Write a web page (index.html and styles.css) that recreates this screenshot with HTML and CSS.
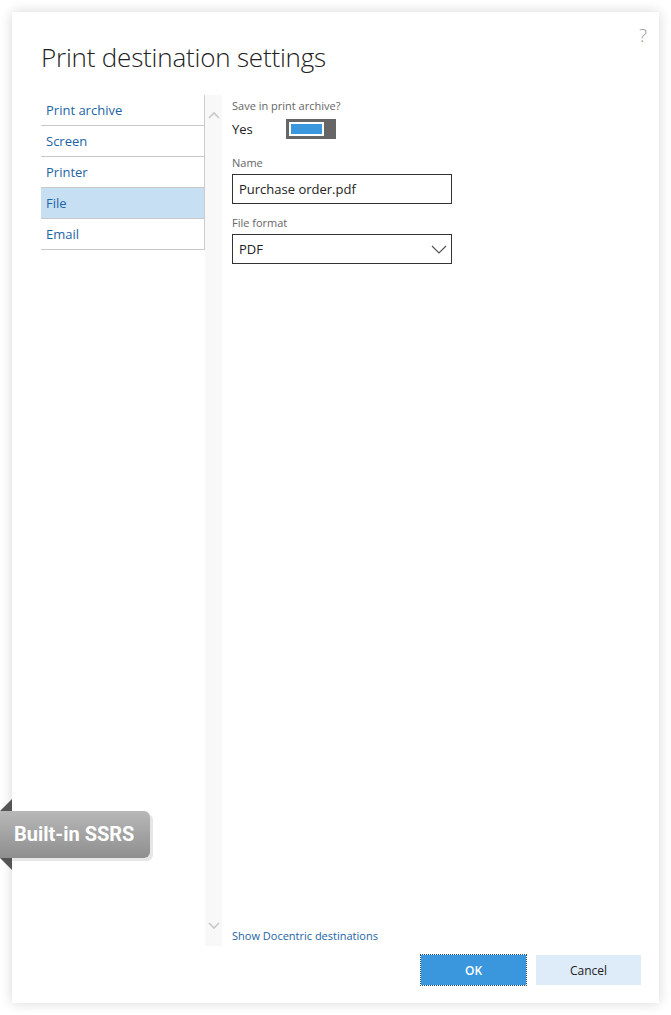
FILE: index.html
```html
<!DOCTYPE html>
<html lang="en">
<head>
    <meta charset="UTF-8">
    <meta name="viewport" content="width=device-width, initial-scale=1.0">
    <title>Print destination settings</title>
    <link rel="stylesheet" href="styles.css">
</head>
<body>
    <div class="dialog">
        <span class="help">?</span>
        <h1>Print destination settings</h1>

        <div class="body">
            <ul class="nav">
                <li>Print archive</li>
                <li>Screen</li>
                <li>Printer</li>
                <li class="active">File</li>
                <li>Email</li>
            </ul>

            <div class="scroller">
                <svg width="12" height="8" viewBox="0 0 12 8"><path d="M1 7 L6 2 L11 7" fill="none" stroke="#c8c8c8" stroke-width="1.6"/></svg>
                <svg width="12" height="8" viewBox="0 0 12 8"><path d="M1 1 L6 6 L11 1" fill="none" stroke="#c8c8c8" stroke-width="1.6"/></svg>
            </div>

            <div class="content">
                <div class="field switch-field">
                    <label>Save in print archive?</label>
                    <div class="toggle-row">
                        <span>Yes</span>
                        <span class="toggle"><span class="toggle-fill"></span><span class="toggle-thumb"></span></span>
                    </div>
                </div>
                <div class="field">
                    <label>Name</label>
                    <div class="input">Purchase order.pdf</div>
                </div>
                <div class="field">
                    <label>File format</label>
                    <div class="input select">
                        <span>PDF</span>
                        <svg width="16" height="9" viewBox="0 0 16 9"><path d="M1 1 L8 8 L15 1" fill="none" stroke="#555" stroke-width="1.2"/></svg>
                    </div>
                </div>
                <a class="more" href="#">Show Docentric destinations</a>
            </div>
        </div>

        <div class="actions">
            <button class="ok">OK</button>
            <button class="cancel">Cancel</button>
        </div>
    </div>

    <!-- ribbon overlay -->
    <div class="ribbon">Built-in SSRS</div>
</body>
</html>
```

FILE: styles.css
```css
body {
    margin: 0;
    background-color: #fff;
    font-family: 'Open Sans', 'Noto Sans', sans-serif;
    color: #222;
}
.dialog {
    position: relative;
    margin: 12px;
    width: 647px;
    height: 991px;
    background-color: #fff;
    box-shadow: 0 0 12px rgba(0,0,0,0.16);
    display: flex;
    flex-direction: column;
    box-sizing: border-box;
    padding: 0 18px 18px 29px;
}
.help {
    position: absolute;
    top: 10px;
    right: 12px;
    font-size: 19px;
    font-weight: 300;
    color: #999;
}
h1 {
    margin: 27px 0 20px 0;
    font-size: 26px;
    font-weight: 300;
    color: #222;
    letter-spacing: -0.2px;
    line-height: 36px;
}
.body {
    flex: 1;
    display: flex;
}
.nav {
    list-style: none;
    margin: 0;
    padding: 0;
    width: 163px;
    align-self: flex-start;
    border-right: 1px solid #ccc;
}
.nav li {
    height: 30px;
    line-height: 30px;
    padding-left: 5px;
    font-size: 13px;
    color: #1d64a6;
    border-bottom: 1px solid #c8c8c8;
}
.nav li.active {
    background-color: #c7dff3;
}
.scroller {
    width: 17px;
    background-color: #f8f8f8;
    display: flex;
    flex-direction: column;
    justify-content: space-between;
    align-items: center;
    padding: 16px 0 16px 0;
}
.content {
    flex: 1;
    padding: 3px 0 0 10px;
    display: flex;
    flex-direction: column;
}
.field {
    margin-bottom: 11px;
}
.switch-field {
    margin-bottom: 15px;
}
.field label {
    display: block;
    font-size: 11px;
    color: #666;
    line-height: 16px;
    margin-bottom: 3px;
}
.toggle-row {
    display: flex;
    align-items: center;
    gap: 33px;
    font-size: 13px;
    height: 22px;
    margin-top: 4px;
}
.toggle {
    display: flex;
    width: 50px;
    height: 20px;
    box-sizing: border-box;
    border: 3px solid #666;
    background-color: #666;
}
.toggle-fill {
    width: 35px;
    box-sizing: border-box;
    border: 2px solid #fff;
    background-color: #3a96dd;
}
.toggle-thumb {
    flex: 1;
}
.input {
    width: 220px;
    height: 30px;
    box-sizing: border-box;
    border: 1px solid #333;
    padding: 0 6px;
    font-size: 13px;
    line-height: 28px;
}
.select {
    display: flex;
    justify-content: space-between;
    align-items: center;
    padding-right: 4px;
}
.more {
    margin-top: auto;
    font-size: 11px;
    color: #1d64a6;
    text-decoration: none;
    padding-bottom: 3px;
}
.actions {
    display: flex;
    justify-content: flex-end;
    gap: 10px;
    padding-top: 9px;
}
.actions button {
    width: 105px;
    height: 30px;
    border: none;
    font-family: 'Open Sans', 'Noto Sans', sans-serif;
    font-size: 12px;
}
.ok {
    background-color: #3a96dd;
    color: #fff;
    font-weight: 600;
    outline: 1px dotted #1b4f7a;
}
.cancel {
    background-color: #deebf8;
    color: #222;
}
.ribbon {
    position: absolute;
    left: 0;
    top: 811px;
    width: 150px;
    height: 47px;
    box-sizing: border-box;
    padding-left: 14px;
    line-height: 47px;
    font-family: Roboto, 'Liberation Sans', sans-serif;
    font-weight: 700;
    font-size: 20px;
    color: #fff;
    background: linear-gradient(#b8b8b8, #8e8e8e);
    border-radius: 0 6px 6px 0;
    box-shadow: 3px 3px 0 #e6e6e6;
}
.ribbon::before,
.ribbon::after {
    content: "";
    position: absolute;
    left: 0;
    border-left: 12px solid transparent;
}
.ribbon::before {
    top: -12px;
    border-bottom: 12px solid #555;
}
.ribbon::after {
    bottom: -12px;
    border-top: 12px solid #555;
}
```
